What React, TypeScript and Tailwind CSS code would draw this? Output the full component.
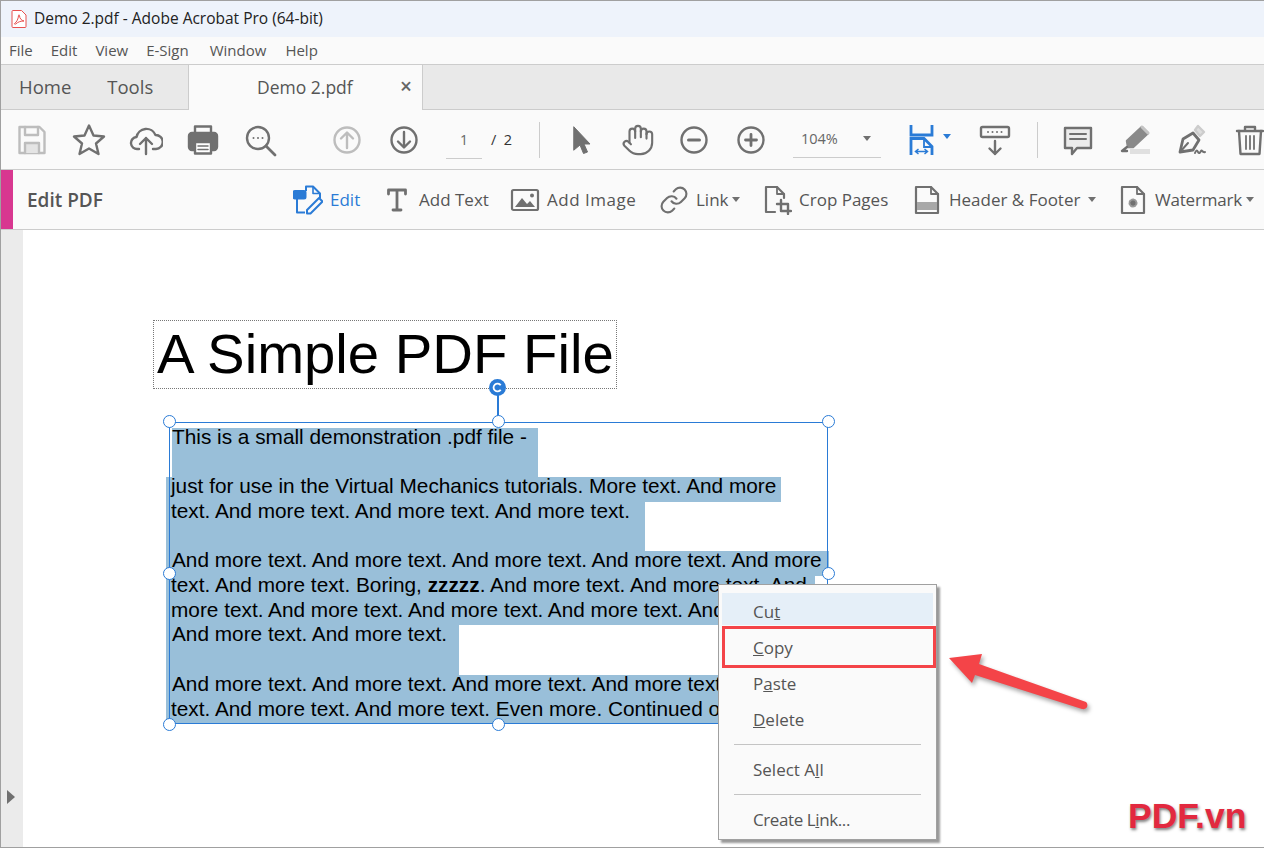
import React from 'react';
import { Hand, Link } from 'lucide-react';

const GRAY = '#707070';
const BLUE = '#2a7bd6';

const Caret: React.FC<{ className?: string }> = ({ className = 'border-t-[#707070]' }) => (
  <span className={`inline-block w-0 h-0 border-x-[4.5px] border-x-transparent border-t-[5px] ${className}`} />
);

const ToolIcon: React.FC<{ children: React.ReactNode; className?: string }> = ({ children, className = '' }) => (
  <svg viewBox="0 0 34 34" className={`w-[34px] h-[34px] shrink-0 ${className}`} fill="none" stroke={GRAY} strokeWidth="2.4" strokeLinejoin="round" strokeLinecap="round">
    {children}
  </svg>
);

const RibbonIcon: React.FC<{ children: React.ReactNode }> = ({ children }) => (
  <svg viewBox="0 0 30 30" className="w-[30px] h-[30px] shrink-0" fill="none" stroke={GRAY} strokeWidth="2.2" strokeLinejoin="round" strokeLinecap="round">
    {children}
  </svg>
);

const Ribbon: React.FC<{ icon: React.ReactNode; label: string; left: string; width: string; caret?: string; blue?: boolean }> = ({ icon, label, left, width, caret, blue }) => (
  <div className={`flex items-center shrink-0 ${left}`}>
    {icon}
    <span className={`ml-[7px] text-[17px] whitespace-nowrap ${width} ${blue ? 'text-[#2a7bd6]' : 'text-[#555555]'}`}>{label}</span>
    {caret && <Caret className={`${caret} border-t-[#707070]`} />}
  </div>
);

const Handle: React.FC<{ className: string }> = ({ className }) => (
  <div className={`absolute w-[13px] h-[13px] rounded-full border-[1.5px] border-[#2a7bd6] bg-white ${className}`} />
);

const MenuItem: React.FC<{ children: React.ReactNode; className?: string }> = ({ children, className = '' }) => (
  <div className={`h-9 flex items-center pl-[34px] text-[17px] text-[#555555] ${className}`}>
    <span>{children}</span>
  </div>
);

const Row: React.FC<{ className: string; children?: React.ReactNode }> = ({ className, children }) => (
  <div className={`bg-[#99bfd9] whitespace-nowrap leading-[18px] ${className}`}>{children}</div>
);

export default function App() {
  return (
    <div className="w-[1264px] h-[848px] overflow-hidden relative bg-white border-l border-t border-b border-[#a0a0a0] font-['Open_Sans','Noto_Sans',sans-serif] flex flex-col">
      {/* title bar */}
      <div className="h-9 shrink-0 bg-[#eef3fb] flex items-center pl-[10px]">
        <svg viewBox="0 0 16 18" className="w-[16px] h-[18px]" fill="none">
          <path d="M1 1.5a1 1 0 0 1 1-1h8.5L15 5v11.5a1 1 0 0 1-1 1H2a1 1 0 0 1-1-1z" fill="#fff" stroke="#e8504f" />
          <path d="M3.5 13.5c2-1 4-5 4-8 0-1 1-1 1 0 0 3 2 5 4.5 5.5-3 0-6 .8-8 2.800-1 .8-2 .2-1.500-.3z" stroke="#e8504f" strokeWidth="1" />
        </svg>
        <span className="ml-[7px] text-[15.500px] text-[#222222] whitespace-nowrap">Demo 2.pdf - Adobe Acrobat Pro (64-bit)</span>
      </div>
      {/* menu bar */}
      <div className="h-[27px] shrink-0 bg-[#fafafa] flex items-center pl-[8px] gap-[18px] text-[15px] text-[#555555]">
        <span>File</span>
        <span>Edit</span>
        <span>View</span>
        <span>E-Sign</span>
        <span className="ml-[3px]">Window</span>
        <span className="ml-px">Help</span>
      </div>
      {/* tabs */}
      <div className="h-[46px] shrink-0 flex bg-[#e9e9e9] border-t border-b border-[#cccccc]">
        <div className="w-[187px] flex items-center pl-[18px] gap-9 text-[18.500px] text-[#555555]">
          <span>Home</span>
          <span>Tools</span>
        </div>
        <div className="w-[235px] -mb-px bg-[#fafafa] border-x border-[#cccccc] flex items-center relative">
          <span className="ml-[68px] text-[17.500px] text-[#555555]">Demo 2.pdf</span>
          <span className="absolute right-[10px] top-[6px] text-[21px] font-semibold text-[#666666]">×</span>
        </div>
      </div>
      {/* toolbar */}
      <div className="h-[60px] shrink-0 bg-[#fafafa] border-b border-[#cccccc] flex items-center pl-[14px] gap-[23px]">
        <ToolIcon>
          <g stroke="#bdbdbd">
            <path d="M4.500 4h20l5 5v21h-25z" />
            <path d="M10 4v8h13V4" />
            <path d="M10 30V20h14v10" fill="#e4e4e4" />
          </g>
        </ToolIcon>
        <ToolIcon>
          <polygon points="17,2.500 21.500,12.500 32,13.500 24,20.500 26.500,31 17,25.500 7.500,31 10,20.500 2,13.500 12.500,12.500" />
        </ToolIcon>
        <ToolIcon>
          <path d="M10 26H8.500a6 6 0 0 1-1-12A10 10 0 0 1 26.500 12a7 7 0 0 1 .5 14H24" />
          <path d="M17 31V15M11 21l6-6 6 6" />
        </ToolIcon>
        <ToolIcon>
          <path d="M9 10V3.500h16V10" strokeWidth="2.400" />
          <rect x="3" y="10" width="28" height="17" rx="3" fill={GRAY} />
          <rect x="9" y="19" width="16" height="11.500" fill="#fff" />
          <path d="M12 23h10M12 26.500h10" strokeWidth="1.500" />
        </ToolIcon>
        <ToolIcon>
          <circle cx="15" cy="15" r="11" />
          <path d="M23 23l9 9" strokeWidth="2.800" />
          <path d="M10.500 15h.01M15 15h.01M19.500 15h.01" strokeWidth="2" />
        </ToolIcon>
        <ToolIcon className="ml-[30px]">
          <g stroke="#bdbdbd">
            <circle cx="17" cy="17" r="12.500" />
            <path d="M17 25V10M11 15.500L17 9.500l6 6" />
          </g>
        </ToolIcon>
        <ToolIcon>
          <circle cx="17" cy="17" r="12.500" />
          <path d="M17 9v15M11 18.500l6 6 6-6" />
        </ToolIcon>
        <div className="ml-[2px] w-[36px] h-[37px] border-b border-[#cccccc] flex items-center justify-center text-[14px] text-[#666666] shrink-0 -mb-[1px]">1</div>
        <div className="-ml-[14px] text-[14.500px] text-[#333333] whitespace-nowrap w-[25px] shrink-0">/&nbsp;&nbsp;2</div>
        <div className="w-px h-[36px] bg-[#cccccc] shrink-0" />
        <ToolIcon className="ml-[1px]">
          <path d="M10 4l16 17h-6l3.500 8-4 1.500L16 22l-6 5z" fill={GRAY} strokeWidth="1" />
        </ToolIcon>
        <Hand size={34} strokeWidth={1.500} color={GRAY} className="shrink-0" />
        <ToolIcon className="-ml-[1px]">
          <circle cx="17" cy="17" r="12.500" />
          <path d="M11.500 17h11" strokeWidth="3" />
        </ToolIcon>
        <ToolIcon>
          <circle cx="17" cy="17" r="12.500" />
          <path d="M11.500 17h11M17 11.500v11" strokeWidth="2.800" />
        </ToolIcon>
        <div className="ml-[2px] w-[88px] h-[37px] border-b border-[#cccccc] flex items-center shrink-0 relative text-[14.500px] text-[#666666]">
          <span className="ml-[8px]">104%</span>
          <Caret className="absolute right-[10px] top-[15px] border-t-[#707070]" />
        </div>
        <div className="ml-[5px] w-[44px] flex items-center shrink-0">
          <svg viewBox="0 0 26 34" className="w-[26px] h-[34px]" fill="none" stroke={BLUE} strokeWidth="2.800">
            <path d="M2 2v10h21V2" />
            <path d="M2 32V15.500h13l8 8V32" />
            <path d="M15 16v8h8" strokeWidth="1.800" />
            <path d="M7 28.500h11M9.500 26l-3 2.500 3 2.500M15.500 26l3 2.500-3 2.500" strokeWidth="1.500" />
          </svg>
          <Caret className="ml-[8px] mb-[6px] border-t-[#2a7bd6]" />
        </div>
        <ToolIcon className="ml-[2px]">
          <rect x="3" y="4" width="28" height="10" rx="1.500" />
          <path d="M10 9h.01M14.500 9h.01M19 9h.01M23.500 9h.01" strokeWidth="2" />
          <path d="M17 18v13M11.500 25.500L17 31l5.500-5.500" />
        </ToolIcon>
        <div className="w-px h-[36px] bg-[#cccccc] shrink-0 ml-[2px]" />
        <ToolIcon>
          <path d="M4 5h26v20H16l-5 6v-6H4z" fill="#ececec" />
          <path d="M9 11h16M9 16h16" strokeWidth="2" />
        </ToolIcon>
        <ToolIcon>
          <path d="M9 18L24 4l6 6-15 14h-5z" fill="#8a8a8a" stroke="#8a8a8a" />
          <path d="M24 4l6 6" stroke="#c4c4c4" strokeWidth="3" />
          <path d="M9 24l-5 4h5" stroke="#707070" />
          <rect x="12" y="26" width="20" height="5" fill="#e0e0e0" stroke="none" />
        </ToolIcon>
        <ToolIcon>
          <path d="M5 29l3-13 10-6 6 7-6 10z" strokeWidth="2.800" />
          <path d="M5 29l8-9" strokeWidth="2" />
          <path d="M20 7l3-4 6 6-4 4z" fill="#dddddd" stroke="#cccccc" />
          <path d="M20 30c1-3 2-3 3-1s2 1 3-1 1 2 4 1" strokeWidth="2" />
        </ToolIcon>
        <ToolIcon className="ml-px">
          <path d="M4 8h26M12 8V4h10v4" />
          <path d="M6 8l1.500 23h19L28 8" />
          <path d="M13 13v13M17 13v13M21 13v13" strokeWidth="1.800" />
        </ToolIcon>
      </div>
      {/* edit ribbon */}
      <div className="h-[60px] shrink-0 bg-[#fafafa] border-b border-[#cccccc] flex items-center">
        <div className="w-3 h-full bg-[#d83790] shrink-0" />
        <span className="ml-[14px] pt-px w-[266px] text-[19px] font-semibold text-[#555555] shrink-0">Edit PDF</span>
        <Ribbon
          left=""
          width="w-[29px]"
          blue
          label="Edit"
          icon={
            <svg viewBox="0 0 30 30" className="w-[30px] h-[30px] shrink-0" fill="none" stroke={BLUE} strokeWidth="2" strokeLinejoin="round">
              <path d="M13 6V1.500h7l7 7v5" />
              <path d="M20 1.500v7h7" strokeWidth="1.600" />
              <rect x="0.500" y="6" width="12" height="7.500" rx="1.500" fill={BLUE} />
              <path d="M4 13.500v14h8" />
              <path d="M14 25l12-12 3.500 3.500-12 12H14z" />
            </svg>
          }
        />
        <Ribbon
          left="ml-[23px]"
          width="w-[69px]"
          label="Add Text"
          icon={
            <RibbonIcon>
              <path d="M6.500 9V5h17v4M15 5v20M11 25h8" strokeWidth="2.800" />
            </RibbonIcon>
          }
        />
        <Ribbon
          left="ml-[22px]"
          width="w-[89px] tracking-[0.5px]"
          label="Add Image"
          icon={
            <RibbonIcon>
              <rect x="2" y="5" width="26" height="20" rx="1.500" />
              <path d="M5 22l7-9 5 6 3-3 5 6z" fill={GRAY} stroke="none" />
              <circle cx="22" cy="10.500" r="2" fill={GRAY} stroke="none" />
            </RibbonIcon>
          }
        />
        <Ribbon
          left="ml-[23px]"
          width="w-[31px]"
          label="Link"
          caret="ml-[5px]"
          icon={<Link size={30} strokeWidth={1.700} color={GRAY} className="shrink-0" />}
        />
        <Ribbon
          left="ml-[22px]"
          width="w-[90px]"
          label="Crop Pages"
          icon={
            <RibbonIcon>
              <path d="M13 27H4V2h11l7 7v4" />
              <path d="M15 2v7h7" strokeWidth="1.800" />
              <path d="M19 15v11h10M15 19h11v10" strokeWidth="2.400" />
            </RibbonIcon>
          }
        />
        <Ribbon
          left="ml-[23px]"
          width="w-[133px]"
          label="Header & Footer"
          caret="ml-[6px]"
          icon={
            <RibbonIcon>
              <path d="M4 2h15l7 7v19H4z" />
              <path d="M19 2v7h7" strokeWidth="1.800" />
              <rect x="5" y="17" width="20" height="8" fill="#a8a8a8" stroke="none" />
            </RibbonIcon>
          }
        />
        <Ribbon
          left="ml-[22px]"
          width="w-[86px] tracking-[-0.2px]"
          label="Watermark"
          caret="ml-[5px]"
          icon={
            <RibbonIcon>
              <path d="M4 2h15l7 7v19H4z" />
              <path d="M19 2v7h7" strokeWidth="1.800" />
              <circle cx="15" cy="18" r="3.500" fill={GRAY} stroke="#999999" strokeDasharray="1.500 1.500" strokeWidth="2" />
            </RibbonIcon>
          }
        />
      </div>
      {/* document area */}
      <div className="flex-1 flex min-h-0">
        <div className="w-[22px] shrink-0 bg-[#ebebeb] relative">
          <span className="absolute left-[6px] top-[560px] w-0 h-0 border-y-[7px] border-y-transparent border-l-[8px] border-l-[#707070]" />
        </div>
        <div className="flex-1 relative font-['Liberation_Sans',Arial,sans-serif] text-black">
          {/* heading box */}
          <div className="absolute left-[130px] top-[90px] w-[464px] h-[69px] border border-dotted border-[#777777] flex items-center pl-[3px] text-[56.300px] whitespace-nowrap leading-none">
            A Simple PDF File
          </div>
          {/* selected paragraph */}
          <div className="absolute left-[143px] top-[198px] w-[663px] text-[20.800px]">
            <Row className="ml-[6px] w-[366px] h-[49px]">This is a small demonstration .pdf file -</Row>
            <Row className="w-[615px] h-[25px] pl-[5px]">just for use in the Virtual Mechanics tutorials. More text. And more</Row>
            <Row className="w-[479px] h-[49px] pl-[5px]">text. And more text. And more text. And more text.</Row>
            <Row className="w-[663px] h-[25px] pl-[6px]">And more text. And more text. And more text. And more text. And more</Row>
            <Row className="w-[649px] h-[25px] pl-[5px]">text. And more text. Boring, <b>zzzzz</b>. And more text. And more text. And</Row>
            <Row className="w-[649px] h-[24px] pl-[5px]">more text. And more text. And more text. And more text. And more text.</Row>
            <Row className="w-[293px] h-[50px] pl-[6px]">And more text. And more text.</Row>
            <Row className="w-[620px] h-[25px] pl-[6px]">And more text. And more text. And more text. And more text. And more</Row>
            <Row className="w-[620px] h-[23px] pl-[5px]">text. And more text. And more text. Even more. Continued on page 2 ...</Row>
          </div>
          {/* selection frame */}
          <div className="absolute left-[146px] top-[192px] w-[659px] h-[302px] border border-[#2a7bd6]" />
          <div className="absolute left-[474px] top-[157px] w-[2px] h-[35px] bg-[#2a7bd6]" />
          <div className="absolute left-[466px] top-[149px] w-[17px] h-[17px] rounded-full bg-[#2a7bd6] flex items-center justify-center">
            <svg viewBox="0 0 12 12" className="w-[11px] h-[11px]" fill="none" stroke="#fff" strokeWidth="2">
              <path d="M9.500 3.500A4.300 4.300 0 1 0 9.500 8.500" />
            </svg>
          </div>
          <Handle className="left-[140px] top-[185px]" />
          <Handle className="left-[469px] top-[185px]" />
          <Handle className="left-[799px] top-[185px]" />
          <Handle className="left-[140px] top-[337px]" />
          <Handle className="left-[799px] top-[337px]" />
          <Handle className="left-[140px] top-[488px]" />
          <Handle className="left-[469px] top-[488px]" />
          {/* context menu */}
          <div className="absolute left-[695px] top-[354px] w-[219px] h-[256px] bg-[#fafafa] border border-[#a0a0a0] shadow-[3px_3px_2px_rgba(0,0,0,0.4)] font-['Open_Sans','Noto_Sans',sans-serif] pt-2">
            <MenuItem className="bg-[#e5eff8] mx-[3px] h-[32px] !pl-[31px] pt-[6px]">Cu<u>t</u></MenuItem>
            <MenuItem className="ml-[3px] mt-[1px] h-[42px] border-[3px] border-[#f44448] !pl-[28px] pt-[2px]"><u>C</u>opy</MenuItem>
            <MenuItem className="-mt-[2px]">P<u>a</u>ste</MenuItem>
            <MenuItem><u>D</u>elete</MenuItem>
            <div className="mx-[15px] mt-[6px] mb-[7px] h-px bg-[#c4c4c4]" />
            <MenuItem>Select A<u>l</u>l</MenuItem>
            <div className="mx-[15px] mt-[6px] mb-[7px] h-px bg-[#c4c4c4]" />
            <MenuItem className="tracking-[-0.4px]">Create L<u>i</u>nk...</MenuItem>
          </div>
          {/* arrow */}
          <svg viewBox="0 0 150 70" className="absolute left-[922px] top-[420px] w-[150px] h-[70px] drop-shadow-[2px_3px_2px_rgba(0,0,0,0.35)]">
            <path d="M4 8L37 4l-3 10 107 38c3 3 1 8-4 7L30 25l-3 8z" fill="#f44448" />
          </svg>
          {/* watermark */}
          <div className="absolute left-[1105px] top-[569px] text-[35.500px] font-bold text-[#e2293f] whitespace-nowrap leading-none [text-shadow:1px_2px_3px_rgba(0,0,0,0.5)]">
            PDF.vn
          </div>
        </div>
      </div>
    </div>
  );
}
